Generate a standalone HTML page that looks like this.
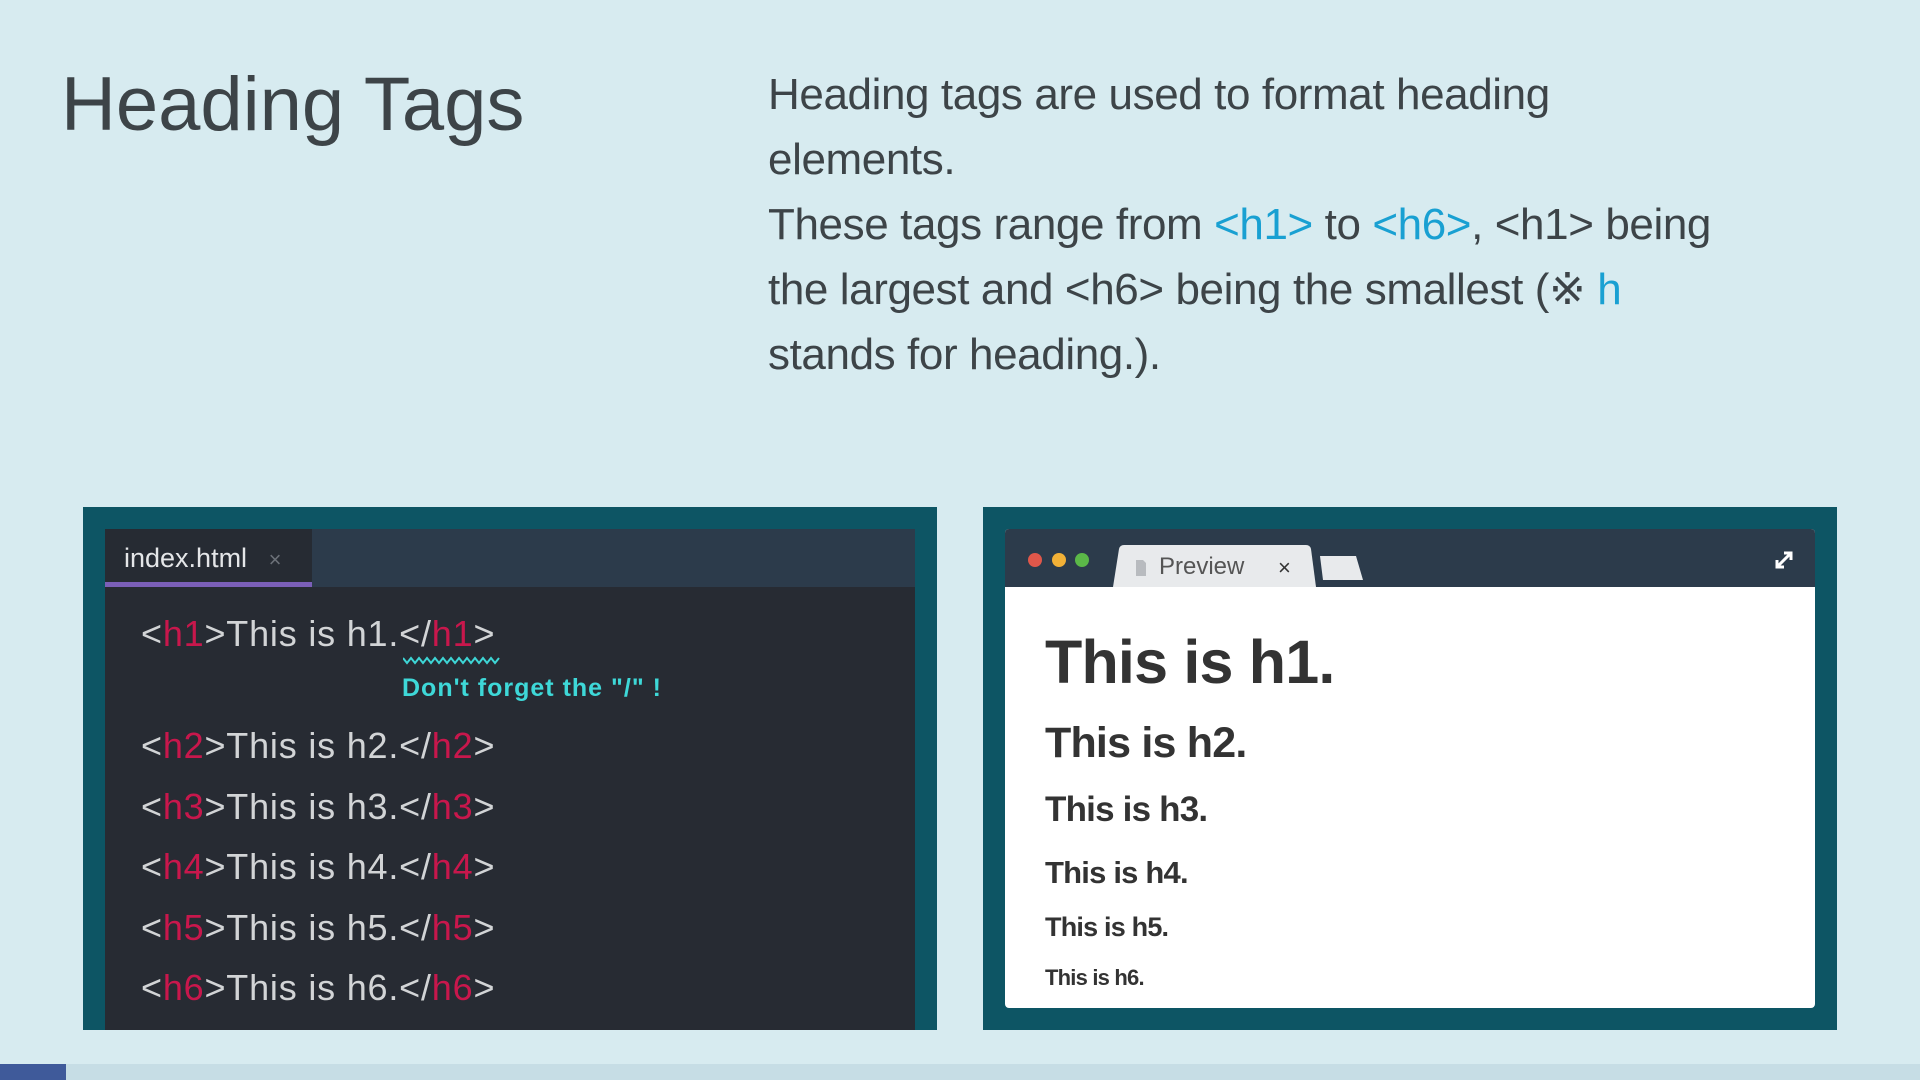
<!DOCTYPE html>
<html><head><meta charset="utf-8"><style>
*{margin:0;padding:0;box-sizing:border-box}
body{width:1920px;height:1080px;background:#d7ebf0;position:relative;overflow:hidden;font-family:"Liberation Sans",sans-serif}
.a{position:absolute;white-space:nowrap}
.t{color:#c8174c}
.code{color:#d2d4d6;font-size:36px;line-height:36px;left:141px;letter-spacing:0.8px}
.pv{color:#333;font-weight:bold;left:1045px;letter-spacing:-0.8px}
.b{color:#19a0d2}
</style></head><body>
<div class="a" style="left:61px;top:67px;font-size:76px;line-height:76px;color:#3d4448">Heading Tags</div>
<div class="a" style="left:768px;top:62px;font-size:44px;line-height:65px;color:#3d4448;letter-spacing:-0.4px">Heading tags are used to format heading<br>elements.<br>These tags range from <span class="b">&lt;h1&gt;</span> to <span class="b">&lt;h6&gt;</span>, &lt;h1&gt; being<br>the largest and &lt;h6&gt; being the smallest (※ <span class="b">h</span><br>stands for heading.).</div>

<div class="a" style="left:83px;top:507px;width:854px;height:523px;background:#0d5564"></div>
<div class="a" style="left:105px;top:529px;width:810px;height:501px;background:#272b33"></div>
<div class="a" style="left:105px;top:529px;width:810px;height:58px;background:#2c3b4b"></div>
<div class="a" style="left:105px;top:529px;width:207px;height:58px;background:#262b33;border-bottom:5px solid #7b5fb8"></div>
<div class="a" style="left:124px;top:543px;font-size:27px;line-height:30px;color:#e4e6e8">index.html <span style="color:#6b7078;font-size:22px;margin-left:14px">×</span></div>
<div class="a code" style="top:616px">&lt;<span class="t">h1</span>&gt;This is h1.&lt;/<span class="t">h1</span>&gt;</div>
<svg class="a" style="left:403px;top:655px" width="100" height="10"><path d="M0 3 L4 8 L8 3 L12 8 L16 3 L20 8 L24 3 L28 8 L32 3 L36 8 L40 3 L44 8 L48 3 L52 8 L56 3 L60 8 L64 3 L68 8 L72 3 L76 8 L80 3 L84 8 L88 3 L92 8 L96 3" stroke="#3ed6d6" stroke-width="2" fill="none"/></svg>
<div class="a" style="left:402px;top:674px;font-size:25px;line-height:28px;color:#3ed8d8;font-weight:bold;letter-spacing:1px">Don't forget the "/" !</div>
<div class="a code" style="top:728px">&lt;<span class="t">h2</span>&gt;This is h2.&lt;/<span class="t">h2</span>&gt;</div>
<div class="a code" style="top:789px">&lt;<span class="t">h3</span>&gt;This is h3.&lt;/<span class="t">h3</span>&gt;</div>
<div class="a code" style="top:849px">&lt;<span class="t">h4</span>&gt;This is h4.&lt;/<span class="t">h4</span>&gt;</div>
<div class="a code" style="top:910px">&lt;<span class="t">h5</span>&gt;This is h5.&lt;/<span class="t">h5</span>&gt;</div>
<div class="a code" style="top:970px">&lt;<span class="t">h6</span>&gt;This is h6.&lt;/<span class="t">h6</span>&gt;</div>

<div class="a" style="left:983px;top:507px;width:854px;height:523px;background:#0d5564"></div>
<div class="a" style="left:1005px;top:529px;width:810px;height:479px;background:#fff;border-radius:4px"></div>
<div class="a" style="left:1005px;top:529px;width:810px;height:58px;background:#2c3b4b;border-radius:4px 4px 0 0"></div>
<div class="a" style="left:1028px;top:553px;width:14px;height:14px;border-radius:50%;background:#e0574a"></div>
<div class="a" style="left:1052px;top:553px;width:14px;height:14px;border-radius:50%;background:#f2b137"></div>
<div class="a" style="left:1075px;top:553px;width:14px;height:14px;border-radius:50%;background:#5bb848"></div>
<svg class="a" style="left:1113px;top:545px" width="255" height="42"><path d="M0 42 L6 4 Q7 0 11 0 L193 0 Q197 0 198 4 L203 42 Z" fill="#e8eaec"/><path d="M207 11 L243 11 L250 35 L210 35 Z" fill="#e8eaec"/><path d="M23 15 L30 15 L33 18 L33 31 L23 31 Z" fill="#b8bbbf"/></svg>
<div class="a" style="left:1159px;top:553px;font-size:24px;line-height:28px;color:#555">Preview</div>
<div class="a" style="left:1278px;top:554px;font-size:22px;line-height:28px;color:#333">×</div>
<svg class="a" style="left:1772px;top:548px" width="24" height="24"><path d="M5 19 L19 5 M12 5 L19 5 L19 12 M5 12 L5 19 L12 19" stroke="#fff" stroke-width="3" fill="none"/></svg>
<div class="a pv" style="top:632px;font-size:61px;line-height:61px">This is h1.</div>
<div class="a pv" style="top:722px;font-size:43px;line-height:43px">This is h2.</div>
<div class="a pv" style="top:792px;font-size:35px;line-height:35px">This is h3.</div>
<div class="a pv" style="top:857px;font-size:31px;line-height:31px">This is h4.</div>
<div class="a pv" style="top:914px;font-size:27px;line-height:27px">This is h5.</div>
<div class="a pv" style="top:967px;font-size:22px;line-height:22px">This is h6.</div>

<div class="a" style="left:0;top:1064px;width:1920px;height:16px;background:#c6dde5"></div>
<div class="a" style="left:0;top:1064px;width:66px;height:16px;background:#3f5a9a"></div>
</body></html>
